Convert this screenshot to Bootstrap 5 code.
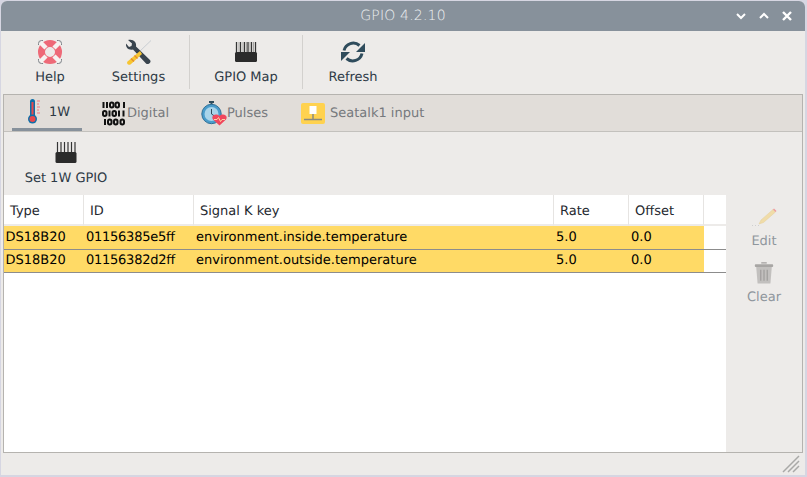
<!DOCTYPE html>
<html lang="en">
<head>
    <meta charset="UTF-8">
    <meta name="viewport" content="width=device-width, initial-scale=1.0">
    <title>GPIO 4.2.10</title>
    <link href="https://cdn.jsdelivr.net/npm/bootstrap@5.3.0/dist/css/bootstrap.min.css" rel="stylesheet">
    <style>
        html, body {
            height: 100%;
        }

        body {
            background-color: #d6d6e2;
            font-family: "DejaVu Sans", sans-serif;
            font-size: 13px;
            line-height: 16px;
            overflow: hidden;
            text-rendering: geometricPrecision;
            font-kerning: normal;
            font-feature-settings: "liga" 1, "clig" 1, "kern" 1;
        }

        .app-window {
            width: 804px;
            height: 474px;
            margin: 1px 0 0 1px;
            background-color: #edebe9;
            border-radius: 6px 6px 0 0;
            overflow: hidden;
        }

        .title-bar {
            height: 30px;
            flex: none;
            background-color: #87919b;
            color: #eef0f2;
            font-family: "DejaVu Sans ExtraLight", "DejaVu Sans", sans-serif;
            font-weight: 200;
            font-size: 14px;
            letter-spacing: .2px;
        }

        .title-side {
            flex: 1 1 0;
            padding-right: 12px;
            gap: 11px;
        }

        .tool-bar {
            height: 62px;
            flex: none;
            padding: 4px 2px 0 2px;
        }

        .tool-btn {
            height: 54px;
            color: #2e3a46;
            padding-top: 3px;
        }

        .tool-btn svg {
            height: 28px;
            margin-bottom: 4px;
        }

        .tool-help { width: 94px; }
        .tool-settings { width: 92px; padding-right: 9px; }
        .tool-map { width: 112px; }
        .tool-refresh { width: 100px; }

        .tool-sep {
            width: 1px;
            height: 54px;
            background-color: #d3d1ce;
        }

        .tab-frame {
            height: 359px;
            flex: none;
            margin: 1px 2px 0 2px;
            border: 1px solid #b5b3af;
        }

        .tab-strip {
            height: 37px;
            flex: none;
            background-color: #e1ddd9;
            border-bottom: 1px solid #c3c1bd;
        }

        .tab-item {
            height: 36px;
            color: #76797d;
        }

        .tab-item span {
            padding-top: 2px;
        }

        .tab-item.is-active {
            color: #2e3a46;
            border-bottom: 3px solid #87919b;
        }

        .tab-one { margin-left: 8px; width: 70px; padding-left: 15px; }
        .tab-one span { margin-left: 7px; }
        .tab-digital { margin-left: 20px; width: 99px; }
        .tab-pulses { width: 100px; }
        .tab-seatalk span { margin-left: 5px; }

        .sub-bar {
            height: 63px;
        }

        .set-btn {
            width: 84px;
            margin-left: 20px;
            color: #2e3a46;
            padding-top: 9px;
        }

        .set-btn svg {
            height: 23px;
            margin-bottom: 7px;
        }

        .gpio-grid {
            width: 722px;
            height: 257px;
            background-color: #fff;
        }

        .gpio-table {
            width: 722px;
            table-layout: fixed;
            border-collapse: separate;
            border-spacing: 0;
            color: #000;
        }

        .col-type { width: 80px; }
        .col-id { width: 110px; }
        .col-key { width: 360px; }
        .col-num { width: 75px; }
        .col-rest { width: 22px; }

        .gpio-table th {
            height: 31px;
            font-weight: 400;
            color: #1f2930;
            padding: 5px 0 0 6px;
            border-right: 1px solid #e6e4e2;
            border-bottom: 2px solid #edebe9;
        }

        .gpio-table th:last-child {
            border-right: 0;
        }

        .gpio-table td {
            height: 23px;
            padding: 0 0 0 2px;
            background-color: #ffda66;
            border-bottom: 1px solid #8c8c8c;
        }

        .gpio-table td:first-child {
            padding-left: 1.5px;
        }

        .gpio-table tr:first-child td {
            height: 24px;
        }

        .gpio-table td:last-child {
            background-color: #fff;
        }

        .gpio-table .id-cell {
            letter-spacing: -.25px;
        }

        .side-bar {
            width: 76px;
            color: #8f969d;
        }

        .side-top {
            height: 75px;
        }

        .side-btn {
            height: 56px;
        }

        .side-edit {
            height: 53px;
        }

        .side-btn svg {
            margin-bottom: 7px;
        }

        .side-btn .trash-icon {
            margin-bottom: 5px;
        }

        .grip-box {
            padding: 0 5px 2px 0;
        }
    </style>
</head>
<body>
    <div class="app-window d-flex flex-column">
        <div class="title-bar d-flex align-items-center">
            <div class="title-side"></div>
            <span>GPIO 4.2.10</span>
            <div class="title-side d-flex justify-content-end">
                <svg width="12" height="10" viewBox="0 0 12 10"><path d="M2 3l4 4 4-4" fill="none" stroke="#fff" stroke-width="2"/></svg>
                <svg width="12" height="10" viewBox="0 0 12 10"><path d="M2 7l4-4 4 4" fill="none" stroke="#fff" stroke-width="2"/></svg>
                <svg width="12" height="10" viewBox="0 0 12 10"><path d="M2 1l8 8M10 1l-8 8" fill="none" stroke="#fff" stroke-width="2.4"/></svg>
            </div>
        </div>

        <div class="tool-bar d-flex">
            <div class="tool-btn tool-help d-flex flex-column align-items-center">
                <svg viewBox="0 0 28 28" width="28">
                    <path d="M2.500 7V5.500A3 3 0 0 1 5.500 2.500H7M21 2.500h1.500A3 3 0 0 1 25.500 5.500V7M25.500 21v1.500A3 3 0 0 1 22.500 25.500H21M7 25.500H5.500A3 3 0 0 1 2.500 22.500V21" fill="none" stroke="#7d8288" stroke-width="1"/>
                    <circle cx="14" cy="14" r="8.500" fill="none" stroke="#ee6a78" stroke-width="7"/>
                    <path d="M4.500 4.500L10 10M23.500 4.500L18 10M4.500 23.500L10 18M23.500 23.500L18 18" stroke="#f6f3f1" stroke-width="4.500"/>
                </svg>
                <span>Help</span>
            </div>
            <div class="tool-btn tool-settings d-flex flex-column align-items-center">
                <svg viewBox="0 0 28 28" width="28">
                    <path d="M26 2.500L14 14" stroke="#c9ced3" stroke-width="1"/>
                    <path d="M3 2l4 3.500-.5 2.500L4 9 1 5.500C.5 9.500 3.500 12.500 8 11.500L21 25.500C23 27.500 27 24 25 22L11 8.500C12 4 8 .5 3 2Z" fill="#39444e"/>
                    <path d="M15 13L2.500 23.500C1 25.500 3.500 27.500 5.500 26.500L17 16Z" fill="#f7c531"/>
                    <path d="M6 20.500l3 3M9.500 17.500l3 3" stroke="#e58a2e" stroke-width="1.200"/>
                </svg>
                <span>Settings</span>
            </div>
            <div class="tool-sep"></div>
            <div class="tool-btn tool-map d-flex flex-column align-items-center">
                <svg viewBox="0 0 28 28" width="28">
                    <path d="M4.500 4v11M8.500 4v11M12.500 4v11M16 4v11M19.500 4v11M23.500 4v11" stroke="#353535" stroke-width="1.300" fill="none"/>
                    <path d="M7 4v11M11 4v11M14.500 4v11M18 4v11M21.500 4v11" stroke="#a5a3a1" stroke-width="1" fill="none"/>
                    <rect x="3" y="14" width="22" height="10" rx="1.500" fill="#2b2b2b"/>
                </svg>
                <span>GPIO Map</span>
            </div>
            <div class="tool-sep"></div>
            <div class="tool-btn tool-refresh d-flex flex-column align-items-center">
                <svg viewBox="0 0 28 28" width="28">
                    <path d="M5 12.500A9.500 9.500 0 0 1 20.500 7.500" fill="none" stroke="#2f4c5c" stroke-width="3"/>
                    <path d="M26 5v9h-9Z" fill="#2f4c5c"/>
                    <path d="M23 15.500A9.500 9.500 0 0 1 7.500 20.500" fill="none" stroke="#2f4c5c" stroke-width="3"/>
                    <path d="M2 23v-9h9Z" fill="#2f4c5c"/>
                </svg>
                <span>Refresh</span>
            </div>
        </div>

        <div class="tab-frame d-flex flex-column">
            <div class="tab-strip d-flex">
                <div class="tab-item tab-one is-active d-flex align-items-center">
                    <svg width="15" height="27" viewBox="0 0 15 27"><rect x="3" y="1" width="5" height="19" rx="2.500" fill="#0f6ea8"/><rect x="4.500" y="4" width="2" height="14" fill="#e8484d"/><circle cx="5.500" cy="21" r="4.500" fill="#0f6ea8"/><circle cx="5.500" cy="21" r="3" fill="#e8484d"/><path d="M10 3h3M10 6h2M10 9h3M10 12h2M10 15h3" stroke="#ee9a9c" stroke-width="1.500"/></svg>
                    <span>1W</span>
                </div>
                <div class="tab-item tab-digital d-flex align-items-center">
                    <svg width="25" height="25" viewBox="0 0 25 25"><g fill="none" stroke="#111" stroke-width="2"><path d="M1.500 1v6M5 1v6"/><rect x="8" y="1.500" width="3.500" height="5" rx="1.700"/><rect x="13.500" y="1.500" width="3.500" height="5" rx="1.700"/><path d="M22 1v6"/><rect x="1" y="10" width="3.500" height="5" rx="1.700"/><path d="M7.500 9.500v6"/><rect x="10.500" y="10" width="3.500" height="5" rx="1.700"/><path d="M17 9.500v6M21.500 9.500v6"/><path d="M3 18v6"/><rect x="6" y="18.500" width="3.500" height="5" rx="1.700"/><rect x="12" y="18.500" width="3.500" height="5" rx="1.700"/><rect x="18.500" y="18.500" width="3.500" height="5" rx="1.700"/></g></svg>
                    <span>Digital</span>
                </div>
                <div class="tab-item tab-pulses d-flex align-items-center">
                    <svg width="26" height="25" viewBox="0 0 26 25"><rect x="8" y="0" width="5" height="2" fill="#2f4c5c"/><rect x="9.500" y="1" width="2" height="3" fill="#2f4c5c"/><circle cx="10.500" cy="13" r="9.700" fill="#4a9ccb" stroke="#2e6f96" stroke-width="1"/><circle cx="10.500" cy="13" r="7" fill="#a9d4ea"/><path d="M10.500 8v5l3 2" fill="none" stroke="#2f4c5c" stroke-width="1"/><path d="M18.500 24.500L12 18.500C9.500 15 14.500 11.500 18.500 15 22.500 11.500 27.500 15 25 18.500Z" fill="#f0475d"/><path d="M13 18.500h3l1.500-2 2 4 1.500-2h3" fill="none" stroke="#ffd0a0" stroke-width="1"/></svg>
                    <span>Pulses</span>
                </div>
                <div class="tab-item tab-seatalk d-flex align-items-center">
                    <svg width="24" height="21" viewBox="0 0 24 21"><rect width="24" height="21" rx="2" fill="#ffd24f"/><rect x="8.500" y="3" width="7" height="8" fill="#fff"/><path d="M12 11v5" stroke="#8a8a80" stroke-width="1.500"/><path d="M3 16.500h18" stroke="#8a8a80" stroke-width="1.500"/></svg>
                    <span>Seatalk1 input</span>
                </div>
            </div>

            <div class="d-flex flex-grow-1">
                <div class="d-flex flex-column">
                    <div class="sub-bar d-flex">
                        <div class="set-btn d-flex flex-column align-items-center">
                            <svg viewBox="0 0 24 23" width="24"><path d="M3.500 1v12M7 1v12M10.500 1v12M14 1v12M17.500 1v12M21 1v12" stroke="#353535" stroke-width="1.200"/><rect x="1.500" y="11" width="21" height="11" rx="1.500" fill="#2b2b2b"/></svg>
                            <span class="text-nowrap">Set 1W GPIO</span>
                        </div>
                    </div>
                    <div class="gpio-grid">
                        <table class="gpio-table">
                            <colgroup>
                                <col class="col-type"><col class="col-id"><col class="col-key"><col class="col-num"><col class="col-num"><col class="col-rest">
                            </colgroup>
                            <thead>
                                <tr><th>Type</th><th>ID</th><th>Signal K key</th><th>Rate</th><th>Offset</th><th></th></tr>
                            </thead>
                            <tbody>
                                <tr><td>DS18B20</td><td class="id-cell">01156385e5ff</td><td>environment.inside.temperature</td><td>5.0</td><td>0.0</td><td></td></tr>
                                <tr><td>DS18B20</td><td class="id-cell">01156382d2ff</td><td>environment.outside.temperature</td><td>5.0</td><td>0.0</td><td></td></tr>
                            </tbody>
                        </table>
                    </div>
                </div>
                <div class="side-bar d-flex flex-column align-items-center">
                    <div class="side-top"></div>
                    <div class="side-btn side-edit d-flex flex-column align-items-center">
                        <svg viewBox="0 0 26 20" width="26" height="20"><path d="M8 17L10 13 22 2.500 24.500 5 12.500 15.500Z" fill="#f0dca8" stroke="#e4cf9a" stroke-width=".5"/><path d="M22 2.500l1-1 2.500 2.500-1 1Z" fill="#ee9a9c"/><path d="M1 18.500h7" stroke="#cfcfcf" stroke-dasharray="1 2"/></svg>
                        <span>Edit</span>
                    </div>
                    <div class="side-btn d-flex flex-column align-items-center">
                        <svg class="trash-icon" viewBox="0 0 24 26" width="22" height="25"><path d="M9 2.500h6" stroke="#a8a6a4" stroke-width="1.500"/><rect x="2" y="4" width="20" height="3" rx="1" fill="#a8a6a4"/><path d="M3.500 7h17l-1.500 18H5Z" fill="#c2c0be"/><path d="M8.500 10v12M12 10v12M15.500 10v12" stroke="#9c9a98" stroke-width="1.200"/></svg>
                        <span>Clear</span>
                    </div>
                </div>
            </div>
        </div>

        <div class="grip-box flex-grow-1 d-flex justify-content-end align-items-end">
            <svg width="18" height="18" viewBox="0 0 18 18"><path d="M1 17L17 1M6 17L17 6M11 17l6-6" stroke="#a9a9a7" stroke-width="1.500" fill="none"/></svg>
        </div>
    </div>
</body>
</html>
